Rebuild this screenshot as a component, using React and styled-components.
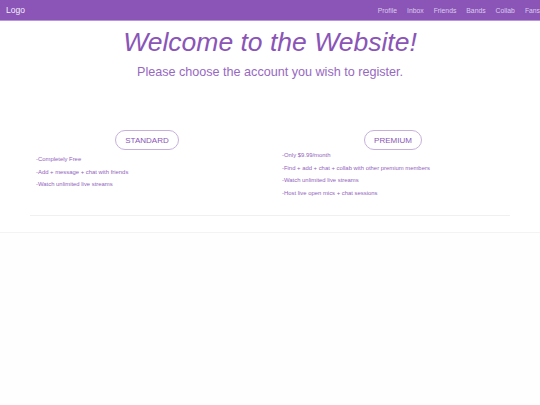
import React from "react";
import styled, { createGlobalStyle } from "styled-components";

const Global = createGlobalStyle`
  html, body { margin: 0; padding: 0; background: #ffffff; }
  body { font-family: "Liberation Sans", Arial, sans-serif; overflow: hidden; }
  #root { min-height: 405px; display: flex; flex-direction: column; }
`;

const Nav = styled.nav`
  height: 20px;
  background: #8a55b7;
  border-bottom: 1px solid #b996d8;
  display: flex;
  align-items: center;
  padding-left: 6px;
  overflow: hidden;
  white-space: nowrap;
`;

const Logo = styled.span`
  color: #f4eefa;
  font-size: 8.5px;
`;

const Links = styled.div`
  margin-left: auto;
  margin-right: -5px;
  display: flex;
`;

const NavLink = styled.span`
  color: #dccbee;
  font-size: 6.8px;
  padding: 0 5px;
`;

const Main = styled.main`
  display: flex;
  flex-direction: column;
  align-items: center;
`;

const Title = styled.h1`
  margin: 5px 0 0;
  font-size: 26.5px;
  font-style: italic;
  font-weight: normal;
  color: #8a55b7;
  line-height: 32px;
`;

const Subtitle = styled.p`
  margin: 6px 0 0;
  font-size: 12.6px;
  color: #9768c2;
  line-height: 16px;
`;

const Plans = styled.section`
  align-self: stretch;
  margin: 50px 30px 0;
  padding-bottom: 16px;
  border-bottom: 1px solid #f0f0f0;
  display: grid;
  grid-template-columns: 1fr 1fr;
  column-gap: 12px;
`;

const Plan = styled.div`
  display: flex;
  flex-direction: column;
`;

const Pill = styled.div`
  align-self: center;
  height: 18px;
  padding: 0 ${(p) => p.$pad}px;
  border: 1px solid #c7b0dc;
  border-radius: 10px;
  color: #8a55b7;
  font-size: 8px;
  display: flex;
  align-items: center;
`;

const Features = styled.ul`
  list-style: none;
  margin: ${(p) => p.$top}px 0 0;
  padding: 0 0 0 6px;
`;

const Feature = styled.li`
  font-size: 5.9px;
  line-height: 12.6px;
  color: #9263be;
`;

const Footer = styled.footer`
  margin-top: 16px;
  flex: 1;
  border-top: 1px solid #f3f3f3;
  background: #fefefe;
`;

const plans = [
  {
    name: "STANDARD",
    pad: 9,
    top: 3,
    features: [
      "-Completely Free",
      "-Add + message + chat with friends",
      "-Watch unlimited live streams",
    ],
  },
  {
    name: "PREMIUM",
    pad: 9,
    top: -1,
    features: [
      "-Only $9.99/month",
      "-Find + add + chat + collab with other premium members",
      "-Watch unlimited live streams",
      "-Host live open mics + chat sessions",
    ],
  },
];

export default function App() {
  return (
    <>
      <Global />
      <Nav>
        <Logo>Logo</Logo>
        <Links>
          {["Profile", "Inbox", "Friends", "Bands", "Collab", "Fans"].map((l) => (
            <NavLink key={l}>{l}</NavLink>
          ))}
        </Links>
      </Nav>
      <Main>
        <Title>Welcome to the Website!</Title>
        <Subtitle>Please choose the account you wish to register.</Subtitle>
        <Plans>
          {plans.map((p) => (
            <Plan key={p.name}>
              <Pill $pad={p.pad}>{p.name}</Pill>
              <Features $top={p.top}>
                {p.features.map((f) => (
                  <Feature key={f}>{f}</Feature>
                ))}
              </Features>
            </Plan>
          ))}
        </Plans>
      </Main>
      <Footer />
    </>
  );
}
